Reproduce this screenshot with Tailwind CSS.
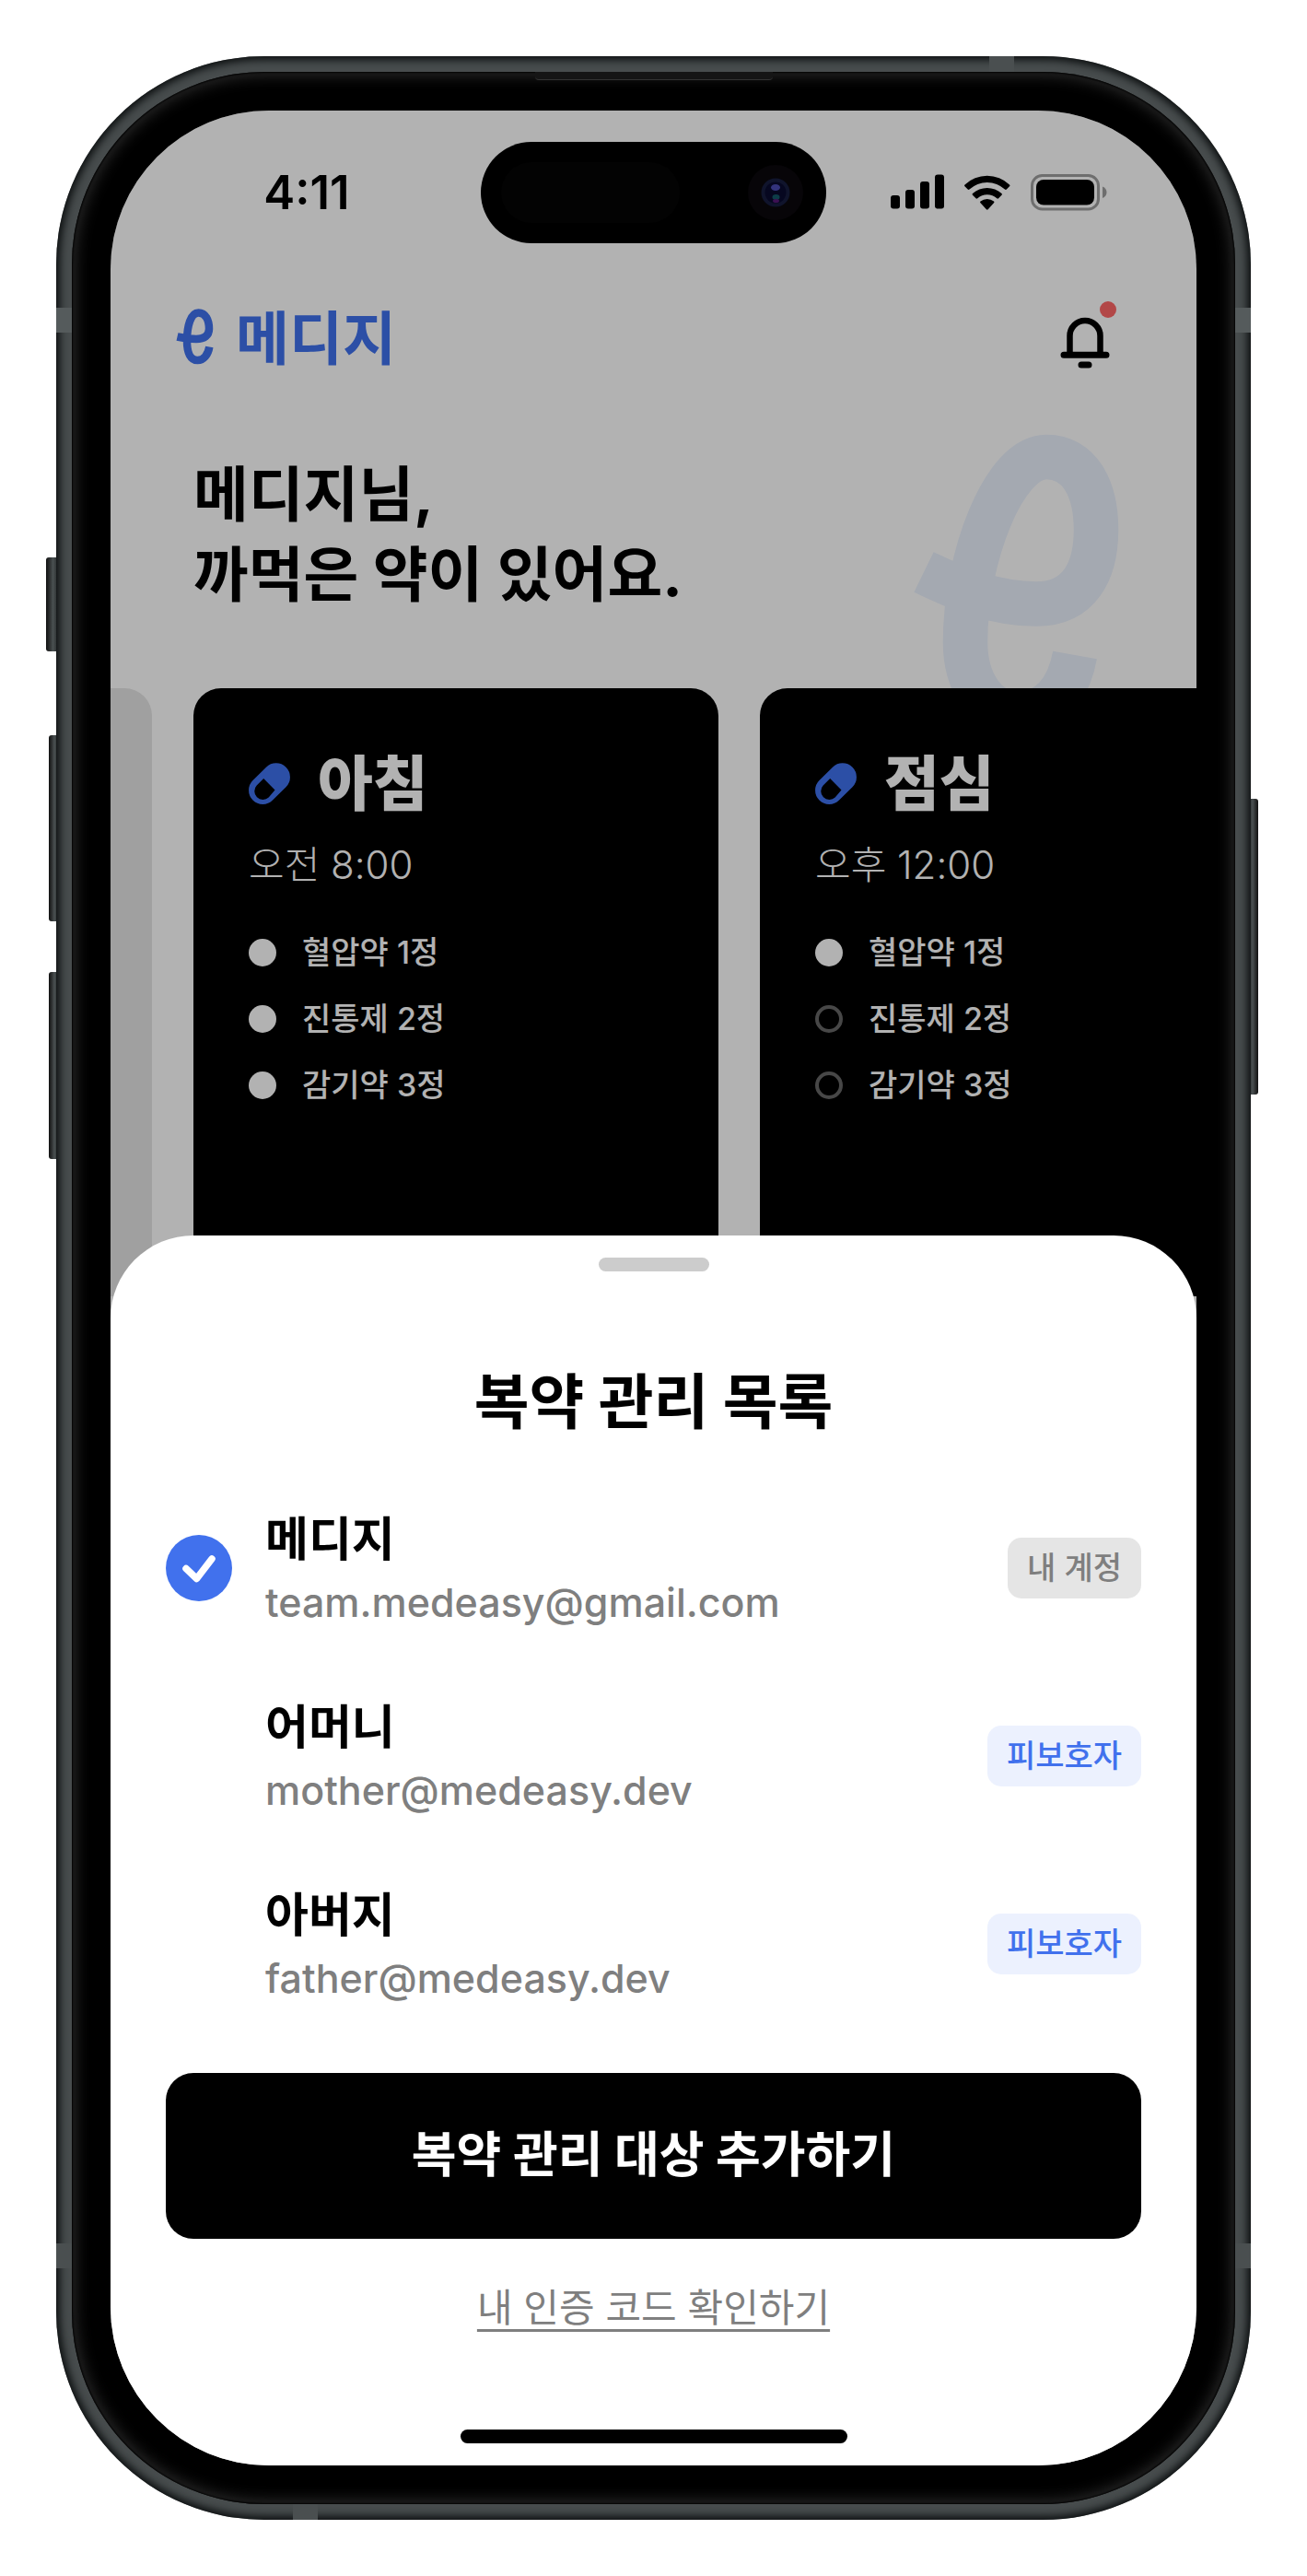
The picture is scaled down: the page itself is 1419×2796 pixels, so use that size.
<!DOCTYPE html>
<html lang="ko">
<head>
<meta charset="utf-8">
<meta name="viewport" content="width=device-width, initial-scale=1">
<title>메디지</title>
<script src="https://cdn.jsdelivr.net/npm/@tailwindcss/browser@4"></script>
</head>
<body class="bg-white font-['Inter','Noto_Sans_CJK_KR',sans-serif] text-black">
<main class="p-[61px]">
  <div class="relative">
    <!-- side buttons -->
    <div class="absolute -left-[11px] top-[544px] h-[102px] w-[15px] rounded-[3px] bg-linear-to-r from-[#111] via-[#4a5051] to-[#1c1f20]"></div>
    <div class="absolute -left-2 top-[737px] h-[202px] w-3 rounded-[3px] bg-linear-to-r from-[#111] via-[#4a5051] to-[#1c1f20]"></div>
    <div class="absolute -left-2 top-[994px] h-[203px] w-3 rounded-[3px] bg-linear-to-r from-[#111] via-[#4a5051] to-[#1c1f20]"></div>
    <div class="absolute -right-2 top-[806px] h-[321px] w-3 rounded-[3px] bg-linear-to-l from-[#111] via-[#4a5051] to-[#1c1f20]"></div>

    <!-- metal frame -->
    <div class="relative rounded-[226px] bg-[#474c4d] p-[17px] shadow-[inset_0_0_9px_4px_#0d1011]">
      <div class="absolute left-0 top-[273px] h-[27px] w-[17px] bg-[#555b5c]"></div>
      <div class="absolute right-0 top-[273px] h-[27px] w-[17px] bg-[#555b5c]"></div>
      <div class="absolute bottom-[273px] left-0 h-[27px] w-[17px] bg-[#4a4f50]"></div>
      <div class="absolute bottom-[273px] right-0 h-[27px] w-[17px] bg-[#4a4f50]"></div>
      <div class="absolute right-[257px] top-0 h-[17px] w-[27px] bg-[#4a4f50]"></div>
      <div class="absolute bottom-0 left-[257px] h-[17px] w-[27px] bg-[#4a4f50]"></div>

      <!-- bezel -->
      <div class="relative rounded-[209px] bg-black p-[42px] shadow-[inset_0_0_2px_1px_#000,inset_0_0_18px_2px_#333]">
        <div class="absolute left-1/2 top-0 h-[9px] w-[258px] -translate-x-1/2 rounded-b-[4px] border-b border-[#333] bg-[#151515]"></div>

        <!-- screen -->
        <div class="relative overflow-hidden rounded-[172px] bg-white">
          <div class="absolute inset-0 z-10 bg-black/30"></div>

          <!-- status bar -->
          <div class="relative z-20 grid grid-cols-[1fr_375px_1fr] items-center pt-[34px]">
            <time class="pl-6 text-center text-[51px] leading-[60px] font-semibold">4:11</time>
            <div class="flex h-[110px] items-center justify-between rounded-full bg-black pl-[22px] pr-[25px]">
              <div class="h-[66px] w-[194px] rounded-full bg-[#030303]"></div>
              <svg class="h-[60px] w-[60px]" viewBox="0 0 60 60" aria-hidden="true">
                <circle cx="30" cy="30" r="30" fill="#070508"/>
                <circle cx="30" cy="30" r="15.500" fill="#10142c"/>
                <circle cx="30" cy="30" r="11.500" fill="#060720"/>
                <ellipse cx="30" cy="24.500" rx="5" ry="3.500" fill="#33337c"/>
                <ellipse cx="30.500" cy="35" rx="4" ry="3" fill="#0d3c48"/>
                <ellipse cx="30.500" cy="39" rx="3.500" ry="2" fill="#3c1052"/>
              </svg>
            </div>
            <div class="flex items-center pl-[69px]">
              <svg class="h-10 w-[236px]" viewBox="0 0 236 40" aria-label="신호, 와이파이, 배터리" role="img">
                <rect x="1" y="23" width="10" height="14.500" rx="3"/>
                <rect x="17" y="17" width="10" height="20.500" rx="3"/>
                <rect x="33" y="8" width="10" height="29.500" rx="3"/>
                <rect x="49" y="0.500" width="10" height="37" rx="3"/>
                <path d="M81.500 11.500a35 35 0 0 1 48.500 0c.6.600.6 1.200 0 1.800l-3.200 3.300c-.6.600-1.200.6-1.800 0a28 28 0 0 0-38.500 0c-.6.600-1.200.6-1.800 0l-3.200-3.300c-.6-.6-.6-1.200 0-1.800z"/>
                <path d="M90 21a23.500 23.500 0 0 1 31.500 0c.6.600.6 1.200 0 1.800l-3.400 3.400c-.6.600-1.200.6-1.800 0a16 16 0 0 0-21 0c-.6.600-1.200.6-1.800 0L90 22.800c-.6-.6-.6-1.200 0-1.800z"/>
                <path d="M98.500 29.500a11.500 11.500 0 0 1 14.500 0c.6.600.6 1.200 0 1.800l-6.300 7c-.6.600-1.200.6-1.800 0l-6.400-7c-.6-.6-.6-1.200 0-1.800z"/>
                <rect x="154.500" y="1.500" width="72" height="36.500" rx="11" fill="none" stroke="#6e6e6e" stroke-width="3"/>
                <rect x="159" y="6" width="63" height="27.500" rx="8"/>
                <path d="M231 13.500c2.800 1 4.500 3.500 4.500 6.200s-1.700 5.200-4.500 6.200z" fill="#6e6e6e"/>
              </svg>
            </div>
          </div>

          <!-- app header -->
          <header class="flex items-center justify-between pl-[70px] pr-[86px] pt-[55px]">
            <h1 class="flex items-center gap-[22px] text-[63px] leading-[88px] font-bold text-[#3f71ee]">
              <svg class="h-[62px] w-11" viewBox="190 332 44 62" fill="none" stroke="currentColor" stroke-width="8.500" aria-hidden="true">
                <path d="M192.500 363.500C199 365 206 366 213 366C222 366 227 362 227 355C227 345 223 337.500 215.500 337.500C207 337.500 203 352 203 368C203 381 207 389 214.500 389C221 389 226 383 227.300 374.500"/>
              </svg>
              <span class="pt-1">메디지</span>
            </h1>
            <button type="button" aria-label="알림" class="h-[76px] w-[62px]">
              <svg class="h-[76px] w-[62px]" viewBox="1151 324 62 76" fill="none" aria-hidden="true">
                <path d="M1161.500 381V361.500a16.500 16.500 0 0 1 33 0V381" stroke="#000" stroke-width="6.500"/>
                <path d="M1155 382.300H1201M1174 393H1182" stroke="#000" stroke-width="7" stroke-linecap="round"/>
                <circle cx="1203" cy="333" r="9" fill="#ff6666"/>
              </svg>
            </button>
          </header>

          <!-- greeting -->
          <section class="relative pl-[90px] pt-[82px]">
            <svg class="absolute right-[80px] top-[58px] h-[340px] w-[230px]" viewBox="989 469 230 340" fill="none" stroke="#ebf2fe" stroke-width="48.500" aria-hidden="true">
              <path d="M1003 621C1040 639 1080 655.500 1125 655.500C1172 655.500 1190 620 1190 575C1190 530 1172 496 1136 496C1090 496 1048 605 1048 697C1048 740 1070 775 1105 775C1138 775 1160 750 1167 711"/>
            </svg>
            <h2 class="relative text-[65px] leading-[87px] font-bold">메디지님,<br>까먹은 약이 있어요.</h2>
          </section>

          <!-- dose cards -->
          <div class="relative flex h-[740px] justify-start gap-[45px] overflow-hidden pt-20">
            <div class="h-[660px] w-[45px] shrink-0 rounded-r-[30px] bg-[#e5e5e5]"></div>
            <article class="h-[660px] w-[570px] shrink-0 rounded-[30px] bg-black p-[60px] text-white">
              <h3 class="flex items-center gap-[30px] text-[65px] leading-[87px] font-extrabold">
                <svg class="size-[45px] text-[#3f71ee]" viewBox="0 0 45 45" aria-hidden="true">
                  <path fill="currentColor" fill-rule="evenodd" d="M19 4.800a15.200 15.200 0 0 1 21.500 21.500L26 40.500A15.200 15.200 0 0 1 4.500 19zM16.200 17l-7.500 7.500a9.200 9.200 0 0 0 13 13L28.500 29.500z"/>
                </svg>아침
              </h3>
              <p class="text-[42px] leading-[90px] font-light">오전 8:00</p>
              <ul class="mt-3.5 text-[34px] leading-[72px] font-medium">
                <li class="flex items-center gap-7"><span class="size-[30px] rounded-full bg-white"></span>혈압약 1정</li>
                <li class="flex items-center gap-7"><span class="size-[30px] rounded-full bg-white"></span>진통제 2정</li>
                <li class="flex items-center gap-7"><span class="size-[30px] rounded-full bg-white"></span>감기약 3정</li>
              </ul>
            </article>
            <article class="h-[660px] w-[570px] shrink-0 rounded-[30px] bg-black p-[60px] text-white">
              <h3 class="flex items-center gap-[30px] text-[65px] leading-[87px] font-extrabold">
                <svg class="size-[45px] text-[#3f71ee]" viewBox="0 0 45 45" aria-hidden="true">
                  <path fill="currentColor" fill-rule="evenodd" d="M19 4.800a15.200 15.200 0 0 1 21.500 21.500L26 40.500A15.200 15.200 0 0 1 4.500 19zM16.200 17l-7.500 7.500a9.200 9.200 0 0 0 13 13L28.500 29.500z"/>
                </svg>점심
              </h3>
              <p class="text-[42px] leading-[90px] font-light">오후 12:00</p>
              <ul class="mt-3.5 text-[34px] leading-[72px] font-medium">
                <li class="flex items-center gap-7"><span class="size-[30px] rounded-full bg-white"></span>혈압약 1정</li>
                <li class="flex items-center gap-7"><span class="size-[30px] rounded-full border-4 border-[#666]"></span>진통제 2정</li>
                <li class="flex items-center gap-7"><span class="size-[30px] rounded-full border-4 border-[#666]"></span>감기약 3정</li>
              </ul>
            </article>
          </div>

          <!-- bottom sheet -->
          <section class="relative z-20 -mt-[66px] rounded-t-[90px] bg-white px-[60px] pb-6 pt-6">
            <div class="mx-auto h-[15px] w-[120px] rounded-full bg-[#ccc]"></div>
            <h2 class="mt-[98px] text-center text-[65px] leading-[87px] font-bold">복약 관리 목록</h2>

            <div role="radiogroup" aria-label="복약 관리 목록" class="mt-[35px]">
              <label class="flex h-[204px] items-center gap-9">
                <span class="grid shrink-0 place-items-center">
                  <input type="radio" name="account" checked class="peer col-start-1 row-start-1 size-[72px] appearance-none rounded-full checked:bg-[#4171ed]">
                  <svg class="col-start-1 row-start-1 hidden size-[72px] peer-checked:block" viewBox="0 0 72 72" fill="none" stroke="#fff" stroke-width="7.500" stroke-linecap="round" stroke-linejoin="round" aria-hidden="true"><path d="M22 36.500L33.500 47.500L50 26"/></svg>
                </span>
                <span class="flex grow flex-col gap-1 pt-1.5">
                  <span class="text-[51px] leading-[64px] font-bold">메디지</span>
                  <span class="text-[43px] leading-[64px] font-medium text-[#7f7f7f]">team.medeasy@gmail.com</span>
                </span>
                <span class="rounded-[15px] bg-[#e5e5e5] px-[21px] text-[34px] leading-[66px] font-medium text-[#7f7f7f]">내 계정</span>
              </label>
              <label class="flex h-[204px] items-center gap-9">
                <span class="grid shrink-0 place-items-center">
                  <input type="radio" name="account" class="peer col-start-1 row-start-1 size-[72px] appearance-none rounded-full checked:bg-[#4171ed]">
                  <svg class="col-start-1 row-start-1 hidden size-[72px] peer-checked:block" viewBox="0 0 72 72" fill="none" stroke="#fff" stroke-width="7.500" stroke-linecap="round" stroke-linejoin="round" aria-hidden="true"><path d="M22 36.500L33.500 47.500L50 26"/></svg>
                </span>
                <span class="flex grow flex-col gap-1 pt-1.5">
                  <span class="text-[51px] leading-[64px] font-bold">어머니</span>
                  <span class="text-[43px] leading-[64px] font-medium text-[#7f7f7f]">mother@medeasy.dev</span>
                </span>
                <span class="rounded-[15px] bg-[#ecf1fe] px-[21px] text-[34px] leading-[66px] font-medium text-[#4171ed]">피보호자</span>
              </label>
              <label class="flex h-[204px] items-center gap-9">
                <span class="grid shrink-0 place-items-center">
                  <input type="radio" name="account" class="peer col-start-1 row-start-1 size-[72px] appearance-none rounded-full checked:bg-[#4171ed]">
                  <svg class="col-start-1 row-start-1 hidden size-[72px] peer-checked:block" viewBox="0 0 72 72" fill="none" stroke="#fff" stroke-width="7.500" stroke-linecap="round" stroke-linejoin="round" aria-hidden="true"><path d="M22 36.500L33.500 47.500L50 26"/></svg>
                </span>
                <span class="flex grow flex-col gap-1 pt-1.5">
                  <span class="text-[51px] leading-[64px] font-bold">아버지</span>
                  <span class="text-[43px] leading-[64px] font-medium text-[#7f7f7f]">father@medeasy.dev</span>
                </span>
                <span class="rounded-[15px] bg-[#ecf1fe] px-[21px] text-[34px] leading-[66px] font-medium text-[#4171ed]">피보호자</span>
              </label>
            </div>

            <button type="button" class="mt-[38px] block h-[180px] w-full rounded-[30px] bg-black text-[53px] font-bold text-white">복약 관리 대상 추가하기</button>
            <div class="mt-[45px] text-center text-[42px] leading-[60px]">
              <a href="#" class="text-[#7f7f7f] underline decoration-[3px] underline-offset-[8px]">내 인증 코드 확인하기</a>
            </div>
            <div class="mx-auto mt-[102px] h-[15px] w-[420px] rounded-full bg-black"></div>
          </section>
        </div>
      </div>
    </div>
  </div>
</main>
</body>
</html>
